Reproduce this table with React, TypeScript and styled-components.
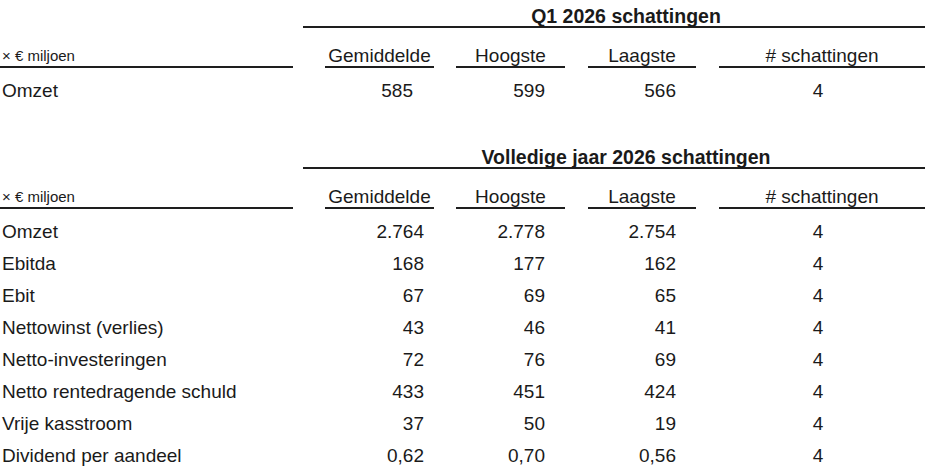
import React from "react"
import styled, { createGlobalStyle } from "styled-components"

const GlobalStyle = createGlobalStyle`
  body {
    margin: 0;
    background: #ffffff;
    color: #1a1a1a;
    font-family: "Liberation Sans", Arial, sans-serif;
  }
`

interface IRow {
  label: string
  values: [string, string, string, string]
}

interface IEstimate {
  title: string
  rows: IRow[]
  firstPad: number
}

const headers = ["Gemiddelde", "Hoogste", "Laagste", "# schattingen"]

// inner line inset per column: [left, right]
const insets: [number, number][] = [
  [0, 10],
  [22, 11],
  [11, 11],
  [12, 11],
  [12, 0]
]

const estimates: IEstimate[] = [
  {
    title: "Q1 2026 schattingen",
    firstPad: 32,
    rows: [{ label: "Omzet", values: ["585", "599", "566", "4"] }]
  },
  {
    title: "Volledige jaar 2026 schattingen",
    firstPad: 21,
    rows: [
      { label: "Omzet", values: ["2.764", "2.778", "2.754", "4"] },
      { label: "Ebitda", values: ["168", "177", "162", "4"] },
      { label: "Ebit", values: ["67", "69", "65", "4"] },
      { label: "Nettowinst (verlies)", values: ["43", "46", "41", "4"] },
      { label: "Netto-investeringen", values: ["72", "76", "69", "4"] },
      { label: "Netto rentedragende schuld", values: ["433", "451", "424", "4"] },
      { label: "Vrije kasstroom", values: ["37", "50", "19", "4"] },
      { label: "Dividend per aandeel", values: ["0,62", "0,70", "0,56", "4"] }
    ]
  }
]

const Page = styled.div`
  width: 925px;
  display: flex;
  flex-direction: column;
  gap: 34px;
`

const Table = styled.div`
  display: grid;
  grid-template-columns: 303px 142px 131px 131px 1fr;
`

const Title = styled.div`
  grid-column: 2 / -1;
  padding: 6px 0 0 24px;
  line-height: 20px;
  font-size: 19.5px;
  font-weight: 700;
  text-align: center;
  border-bottom: 2px solid #1e1e1e;
`

const HeadCell = styled.div<{ $left: number; $right: number }>`
  display: flex;
  align-items: flex-end;
  height: 40px;
  padding-left: ${({ $left }) => $left}px;
  padding-right: ${({ $right }) => $right}px;
`

const HeadLabel = styled.span<{ $unit?: boolean }>`
  flex: 1;
  line-height: 20px;
  font-size: ${({ $unit }) => ($unit ? "15px" : "19px")};
  text-align: ${({ $unit }) => ($unit ? "left" : "center")};
  padding-left: ${({ $unit }) => ($unit ? "2px" : "0")};
  border-bottom: 2px solid #1e1e1e;
`

const Body = styled.div`
  grid-column: 1 / -1;
  display: grid;
  grid-template-columns: subgrid;
  padding-top: 7px;
`

const Label = styled.div`
  height: 32px;
  line-height: 32px;
  font-size: 19px;
  padding-left: 2px;
  white-space: nowrap;
`

const Value = styled.div<{ $pad: number; $center?: boolean }>`
  height: 32px;
  line-height: 32px;
  font-size: 19px;
  text-align: ${({ $center }) => ($center ? "center" : "right")};
  padding-left: ${({ $center }) => ($center ? "12px" : "0")};
  padding-right: ${({ $pad }) => $pad}px;
`

const EstimateTable: React.FC<{ data: IEstimate }> = ({ data }) => {
  const pads = [data.firstPad, 31, 31, 8]
  return (
    <Table>
      <Title>{data.title}</Title>
      <HeadCell $left={insets[0][0]} $right={insets[0][1]}>
        <HeadLabel $unit>× € miljoen</HeadLabel>
      </HeadCell>
      {headers.map((h, i) => (
        <HeadCell key={h} $left={insets[i + 1][0]} $right={insets[i + 1][1]}>
          <HeadLabel>{h}</HeadLabel>
        </HeadCell>
      ))}
      <Body>
        {data.rows.map((row) => (
          <React.Fragment key={row.label}>
            <Label>{row.label}</Label>
            {row.values.map((v, i) => (
              <Value key={i} $pad={pads[i]} $center={i === 3}>
                {v}
              </Value>
            ))}
          </React.Fragment>
        ))}
      </Body>
    </Table>
  )
}

const App: React.FC = () => (
  <>
    <GlobalStyle />
    <Page>
      {estimates.map((e) => (
        <EstimateTable key={e.title} data={e} />
      ))}
    </Page>
  </>
)

export default App
